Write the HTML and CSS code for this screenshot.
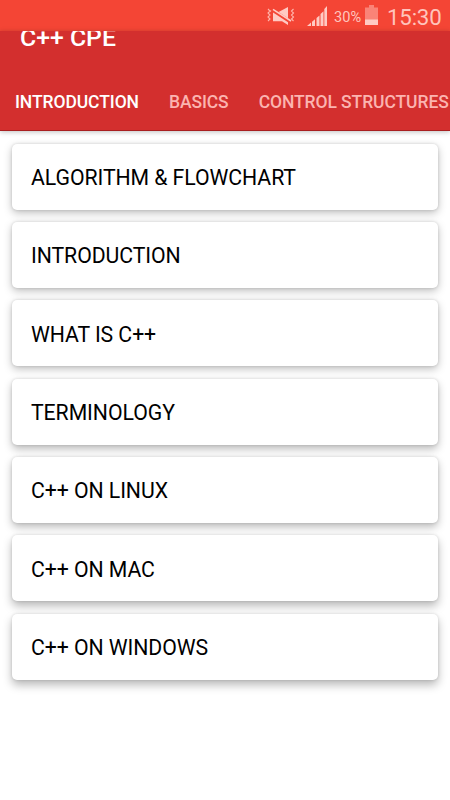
FILE: index.html
```html
<!DOCTYPE html>
<html lang="en">
<head>
<meta charset="utf-8">
<title>C++ CPE</title>
<link rel="stylesheet" href="styles.css">
</head>
<body>
<div class="status">
  <svg class="mute" width="30" height="20" viewBox="0 0 30 20">
    <path class="fill" d="M7 6.5l3.2 2.1L22 16.2V19l-6-3.8H7zM14 5.3L22 1v11.2L12.5 6z"/>
    <path class="line" d="M7 3.4L25 15"/>
    <path class="wave" d="M2 3l2 2-2 2 2 2-2 2 2 2-2 2M5 4.5L3.7 6M27.5 3l-2 2 2 2-2 2 2 2-2 2 2 2"/>
  </svg>
  <svg class="signal" width="21" height="20" viewBox="0 0 21 20">
    <path class="fill" d="M0 20l4-3.4V20zM5 15.8l3-2.5V20H5zM9.5 12l3-2.6V20h-3zM13.5 8l3-2.8V20h-3zM17.3 3l2.7-3v20h-2.7z"/>
  </svg>
  <span class="percent">30%</span>
  <svg class="battery" width="13" height="20" viewBox="0 0 13 20">
    <path class="shell" d="M4 0h5v2.5h4V20H0V2.5h4z"/>
    <path class="fill" d="M0 14.5h13V20H0z"/>
  </svg>
  <span class="clock">15:30</span>
</div>
<header class="appbar">
  <h1 class="title">C++ CPE</h1>
  <nav class="tabs">
    <span class="tab active">INTRODUCTION</span>
    <span class="tab">BASICS</span>
    <span class="tab">CONTROL STRUCTURES</span>
  </nav>
</header>
<main class="list">
  <div class="card">ALGORITHM &amp; FLOWCHART</div>
  <div class="card">INTRODUCTION</div>
  <div class="card">WHAT IS C++</div>
  <div class="card">TERMINOLOGY</div>
  <div class="card">C++ ON LINUX</div>
  <div class="card">C++ ON MAC</div>
  <div class="card">C++ ON WINDOWS</div>
</main>
</body>
</html>
```
FILE: styles.css
```css
* { box-sizing: border-box; }
body {
  margin: 0;
  height: 800px;
  overflow: hidden;
  background: #fff;
  font-family: Roboto, sans-serif;
}
.status {
  height: 31px;
  background: #f44535;
  color: #ffc4bc;
  display: flex;
  align-items: flex-start;
  padding-left: 266px;
  white-space: nowrap;
}
.status svg { flex: none; }
.mute { margin-top: 6px; }
.signal { margin: 6px 0 0 11px; }
.battery { margin: 5px 0 0 4px; }
.fill { fill: #ffcac3; }
.shell { fill: #fa8377; }
.line { stroke: #ffcac3; stroke-width: 1.6; }
.wave { fill: none; stroke: #ffb5ab; stroke-width: 1.1; }
.percent {
  flex: none;
  width: 27px;
  margin-left: 6px;
  font-size: 14.6px;
  line-height: 34px;
}
.clock {
  margin-left: 9px;
  font-size: 22.3px;
  letter-spacing: -0.2px;
  line-height: 35px;
}
.appbar {
  position: relative;
  height: 100px;
  background: #d32f2e;
  border-bottom: 1px solid #a91f20;
  box-shadow: 0 1px 5px rgba(0, 0, 0, .25);
}
.title {
  height: 41px;
  margin: 0;
  padding-left: 20px;
  overflow: hidden;
  color: #fff;
  font-size: 24.8px;
  font-weight: 500;
  line-height: 13px;
}
.tabs {
  display: flex;
  height: 58px;
  padding-left: 15px;
  gap: 30px;
}
.tab {
  flex: none;
  color: #fbb4b0;
  font-size: 17.5px;
  font-weight: 500;
  letter-spacing: -0.09px;
  line-height: 60px;
  white-space: nowrap;
}
.active { color: #fff; }
.list {
  display: grid;
  gap: 12.35px;
  padding: 12.5px 12.5px 0 12px;
}
.card {
  display: flex;
  align-items: center;
  height: 66px;
  padding: 2px 0 0 19px;
  border-radius: 5px;
  background: #fff;
  box-shadow: 0 3px 8px rgba(0, 0, 0, .25), 0 0 3px rgba(0, 0, 0, .14);
  color: #000;
  font-size: 21.25px;
  letter-spacing: -0.07px;
}
.card:nth-child(n+4) {
  box-shadow: 0 4px 9px rgba(0, 0, 0, .27), 0 0 3px rgba(0, 0, 0, .14);
}
.card:nth-child(n+6) {
  box-shadow: 0 5px 10px rgba(0, 0, 0, .28), 0 0 3px rgba(0, 0, 0, .14);
}
```
